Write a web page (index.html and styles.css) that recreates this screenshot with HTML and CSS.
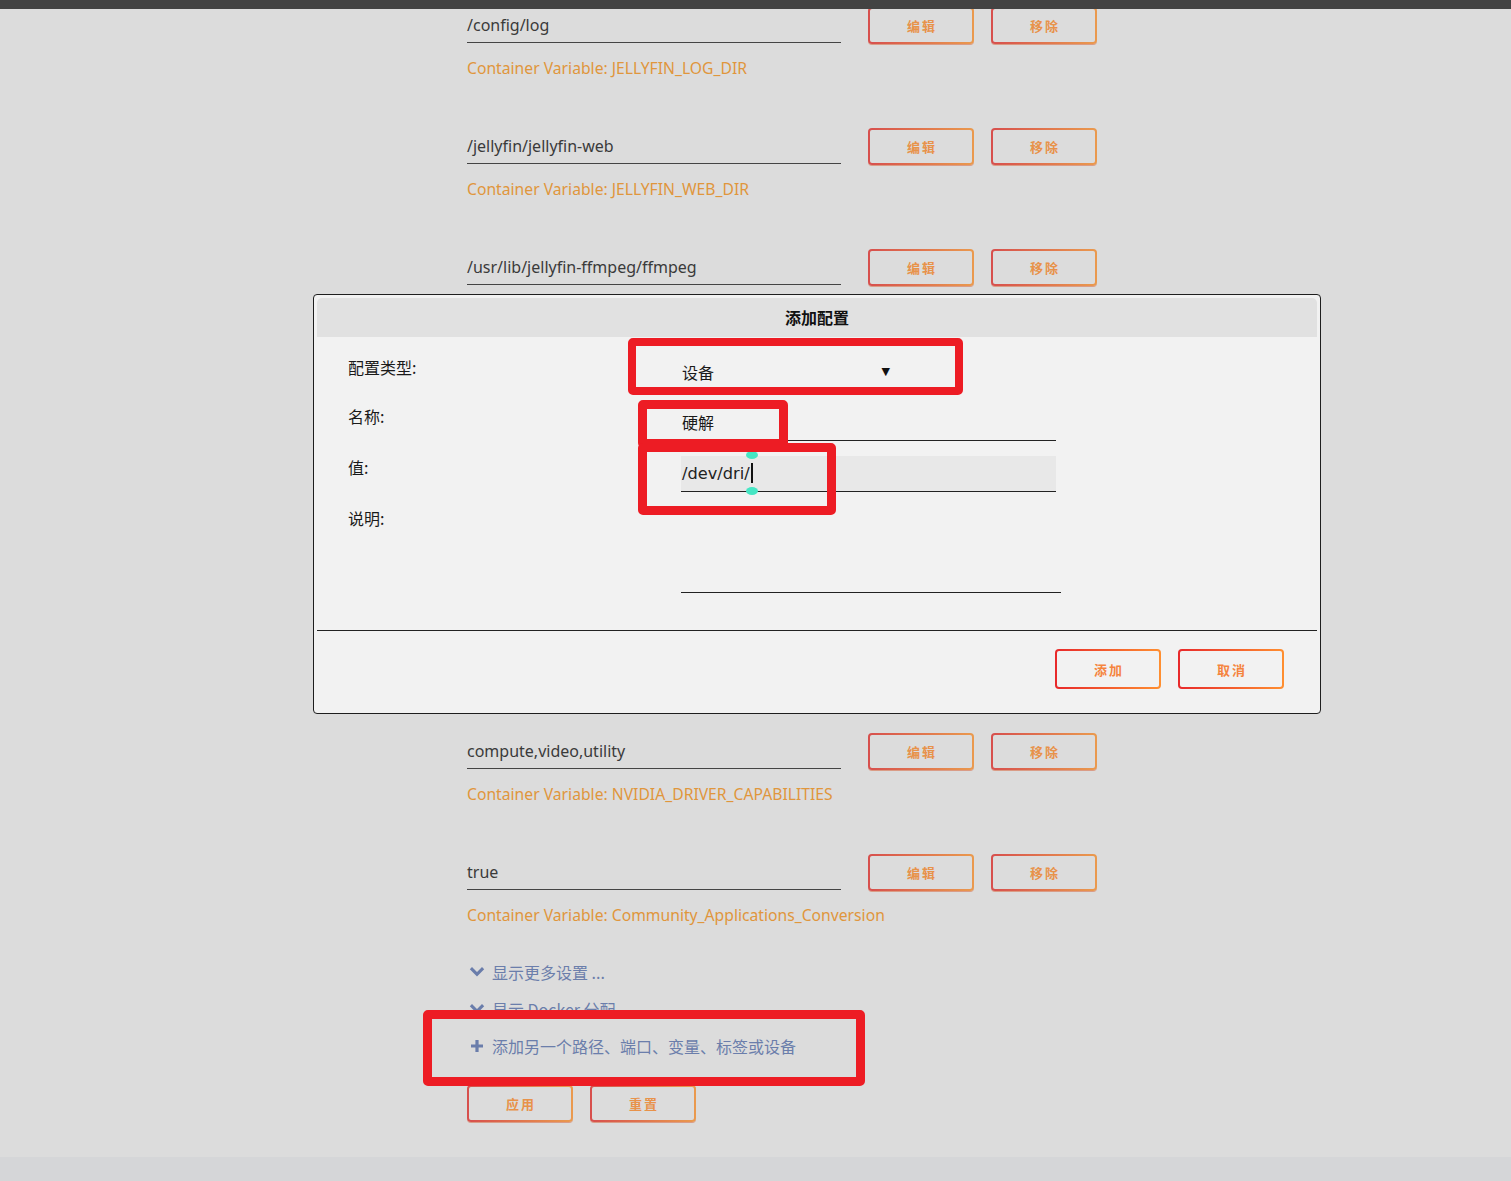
FILE: index.html
```html
<!DOCTYPE html>
<html lang="zh">
<head>
<meta charset="utf-8">
<title>添加配置</title>
<link rel="stylesheet" href="styles.css">
</head>
<body>
<div class="page">
  <div class="topbar"></div>

  <div class="settings">
    <div class="row">
      <div class="line">
        <div class="value">/config/log</div>
        <button class="btn">编辑</button>
        <button class="btn">移除</button>
      </div>
      <div class="hint">Container Variable: JELLYFIN_LOG_DIR</div>
    </div>
    <div class="row">
      <div class="line">
        <div class="value">/jellyfin/jellyfin-web</div>
        <button class="btn">编辑</button>
        <button class="btn">移除</button>
      </div>
      <div class="hint">Container Variable: JELLYFIN_WEB_DIR</div>
    </div>
    <div class="row">
      <div class="line">
        <div class="value">/usr/lib/jellyfin-ffmpeg/ffmpeg</div>
        <button class="btn">编辑</button>
        <button class="btn">移除</button>
      </div>
      <div class="hint">Container Variable: JELLYFIN_FFMPEG</div>
    </div>
    <div class="row">
      <div class="line">
        <div class="value">all</div>
        <button class="btn">编辑</button>
        <button class="btn">移除</button>
      </div>
      <div class="hint">Container Variable: NVIDIA_VISIBLE_DEVICES</div>
    </div>
    <div class="row">
      <div class="line">
        <div class="value">/dev/dri</div>
        <button class="btn">编辑</button>
        <button class="btn">移除</button>
      </div>
      <div class="hint">Container Device: /dev/dri</div>
    </div>
    <div class="row">
      <div class="line">
        <div class="value">8096</div>
        <button class="btn">编辑</button>
        <button class="btn">移除</button>
      </div>
      <div class="hint">Container Port: 8096</div>
    </div>
    <div class="row">
      <div class="line">
        <div class="value">compute,video,utility</div>
        <button class="btn">编辑</button>
        <button class="btn">移除</button>
      </div>
      <div class="hint">Container Variable: NVIDIA_DRIVER_CAPABILITIES</div>
    </div>
    <div class="row">
      <div class="line">
        <div class="value">true</div>
        <button class="btn">编辑</button>
        <button class="btn">移除</button>
      </div>
      <div class="hint">Container Variable: Community_Applications_Conversion</div>
    </div>

    <div class="links">
      <div class="link">
        <svg class="ico" viewBox="0 0 16 16" width="16" height="16"><path d="M0.8 5.2 L3 3 L8 8 L13 3 L15.2 5.2 L8 12.4 Z" fill="#6a7dab"/></svg>
        <span>显示更多设置 ...</span>
      </div>
      <div class="link">
        <svg class="ico" viewBox="0 0 16 16" width="16" height="16"><path d="M0.8 5.2 L3 3 L8 8 L13 3 L15.2 5.2 L8 12.4 Z" fill="#6a7dab"/></svg>
        <span>显示 Docker 分配</span>
      </div>
      <div class="link">
        <svg class="ico" viewBox="0 0 16 16" width="16" height="16"><path d="M6.4 2 H9.6 V6.4 H14 V9.6 H9.6 V14 H6.4 V9.6 H2 V6.4 H6.4 Z" fill="#6a7dab"/></svg>
        <span>添加另一个路径、端口、变量、标签或设备</span>
      </div>
    </div>

    <div class="actions">
      <button class="btn">应用</button>
      <button class="btn">重置</button>
    </div>
  </div>

  <div class="dialog">
    <div class="dlg-title">添加配置</div>
    <div class="dlg-form">
      <div class="frow frow-type">
        <div class="flabel">配置类型:</div>
        <div class="select"><span>设备</span><span class="arrow">▼</span></div>
      </div>
      <div class="frow frow-name">
        <div class="flabel">名称:</div>
        <div class="finput">硬解</div>
      </div>
      <div class="frow frow-val">
        <div class="flabel">值:</div>
        <div class="finput focused">/dev/dri/<span class="caret"></span></div>
      </div>
      <div class="frow frow-desc">
        <div class="flabel">说明:</div>
        <div class="ftextarea"></div>
      </div>
    </div>
    <div class="dlg-sep"></div>
    <div class="dlg-foot">
      <button class="btn btn-hot">添加</button>
      <button class="btn btn-hot">取消</button>
    </div>
  </div>

  <div class="mark mark-type"></div>
  <div class="mark mark-name"></div>
  <div class="mark mark-val"></div>
  <div class="mark mark-add"></div>
</div>
</body>
</html>
```

FILE: styles.css
```css
html, body {
  margin: 0;
  padding: 0;
}

body {
  background: #d5d6d8;
  font-family: "Noto Sans", "Noto Sans CJK SC", sans-serif;
  color: #333;
}

.page {
  position: relative;
  background: #dcdcdc;
  height: 1157px;
  overflow: hidden;
}

.topbar {
  position: absolute;
  left: 0;
  top: 0;
  width: 100%;
  height: 9px;
  background: #434343;
  z-index: 5;
}

.settings {
  padding: 7px 0 0 467px;
}

.row {
  height: 121px;
}

.line {
  display: flex;
  align-items: flex-start;
}

.value {
  width: 374px;
  height: 35px;
  line-height: 37px;
  border-bottom: 1px solid #444;
  font-size: 16px;
  color: #3a3a3a;
  margin-right: 27px;
  white-space: nowrap;
}

.btn {
  width: 106px;
  height: 37px;
  margin: 0 17px 0 0;
  padding: 0;
  border: 2px solid transparent;
  border-radius: 4px;
  background:
    linear-gradient(#dcdcdc, #dcdcdc) padding-box,
    linear-gradient(90deg, #d74f4d, #ea9a4e) border-box;
  box-shadow: 0 1px 0 rgba(217, 113, 77, 0.6);
  color: #e8924a;
  font-family: "Noto Sans CJK SC", sans-serif;
  font-weight: bold;
  font-size: 13px;
  letter-spacing: 2px;
  text-indent: 2px;
  box-sizing: border-box;
  cursor: pointer;
}

.hint {
  margin-top: 14px;
  line-height: 20px;
  font-size: 15.7px;
  color: #e0963c;
  white-space: nowrap;
}

.links {
  margin-top: -22px;
}

.link {
  display: flex;
  align-items: center;
  height: 37px;
  color: #6b7eab;
  font-family: "Noto Sans CJK SC", sans-serif;
  font-size: 16px;
}

.link .ico {
  margin: 0 7px 0 2px;
  flex: none;
}

.actions {
  display: flex;
  margin-top: 21px;
}

/* dialog overlay */
.dialog {
  position: absolute;
  left: 313px;
  top: 294px;
  width: 1008px;
  box-sizing: border-box;
  border: 1px solid #1e1e1e;
  border-radius: 4px;
  background: #f2f2f2;
  z-index: 3;
  color: #1a1a1a;
  font-family: "DejaVu Sans", "Noto Sans CJK SC", sans-serif;
  font-size: 16px;
}

.dlg-title {
  margin: 3px 3px 0;
  height: 39px;
  line-height: 39px;
  background: #e1e1e1;
  border-radius: 5px 5px 0 0;
  text-align: center;
  font-family: "Noto Sans CJK SC", sans-serif;
  font-weight: bold;
  font-size: 16px;
  color: #111;
}

.dlg-form {
  padding: 19px 0 0 34px;
}

.frow {
  display: flex;
  align-items: flex-start;
}

.flabel {
  width: 333px;
  flex: none;
  line-height: 22px;
  height: 22px;
  font-family: "Noto Sans CJK SC", sans-serif;
  font-size: 16px;
  color: #1a1a1a;
}

.select {
  margin-top: 5px;
  width: 208px;
  height: 22px;
  line-height: 22px;
  display: flex;
  justify-content: space-between;
  font-family: "Noto Sans CJK SC", sans-serif;
  padding-left: 1px;
}

.select .arrow {
  font-size: 11px;
  color: #111;
  font-family: "DejaVu Sans", sans-serif;
}

.frow-name {
  margin-top: 22px;
}

.finput {
  margin-top: 1px;
  width: 374px;
  height: 34px;
  line-height: 33px;
  border-bottom: 1px solid #222;
  padding-left: 1px;
  font-family: "Noto Sans CJK SC", sans-serif;
}

.frow-val {
  margin-top: 15px;
}

.frow-val .finput {
  margin-top: 0;
  height: 35px;
  line-height: 35px;
  background: #e8e8e8;
  font-family: "DejaVu Sans", sans-serif;
  font-size: 16.2px;
  color: #222;
}

.caret {
  display: inline-block;
  position: relative;
  width: 2px;
  height: 20px;
  background: #111;
  vertical-align: -4px;
  margin-left: 1px;
}

.caret::before,
.caret::after {
  content: "";
  position: absolute;
  left: -5px;
  width: 12px;
  height: 8px;
  border-radius: 50%;
  background: #46e6c4;
}

.caret::before {
  top: -12px;
}

.caret::after {
  bottom: -12px;
}

.frow-desc {
  margin-top: 15px;
}

.ftextarea {
  width: 380px;
  height: 85px;
  border-bottom: 1px solid #222;
}

.dlg-sep {
  margin: 37px 3px 0;
  height: 1px;
  background: #222;
}

.dlg-foot {
  display: flex;
  justify-content: flex-end;
  padding: 18px 19px 24px 0;
}

.btn-hot {
  height: 40px;
  background:
    linear-gradient(#f2f2f2, #f2f2f2) padding-box,
    linear-gradient(90deg, #e8292b, #ff8f30) border-box;
  box-shadow: none;
  color: #f5843e;
}

/* red annotation boxes */
.mark {
  position: absolute;
  border: 9px solid #ed1c24;
  border-radius: 5px;
  box-sizing: border-box;
  z-index: 6;
}

.mark-type {
  left: 628px;
  top: 338px;
  width: 335px;
  height: 57px;
  border-width: 8px;
}

.mark-name {
  left: 638px;
  top: 400px;
  width: 150px;
  height: 48px;
}

.mark-val {
  left: 638px;
  top: 443px;
  width: 198px;
  height: 72px;
}

.mark-add {
  left: 423px;
  top: 1010px;
  width: 442px;
  height: 76px;
}
```
